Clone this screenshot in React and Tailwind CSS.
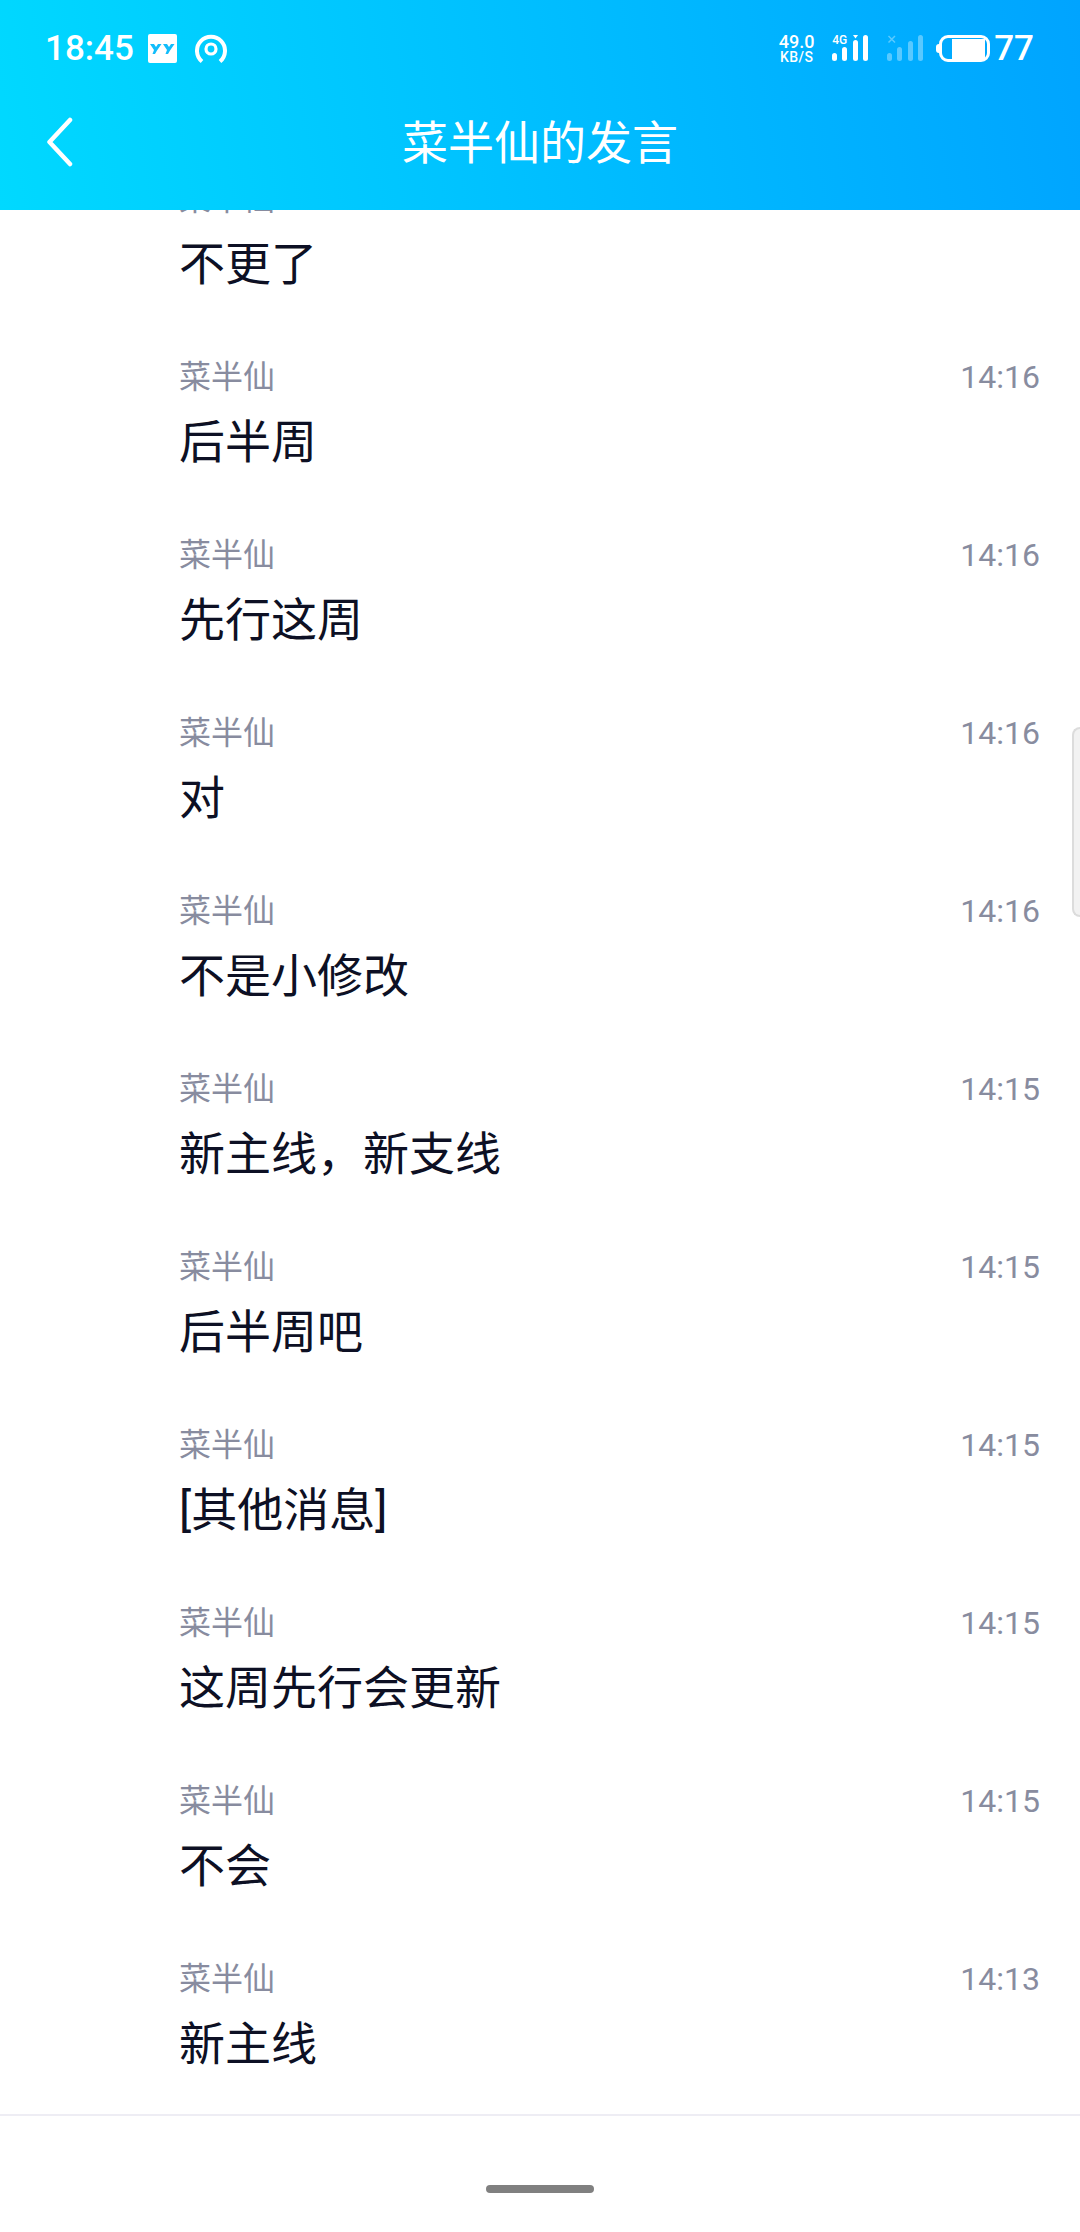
const rows = [
  ['不更了', '14:16'],
  ['后半周', '14:16'],
  ['先行这周', '14:16'],
  ['对', '14:16'],
  ['不是小修改', '14:16'],
  ['新主线，新支线', '14:15'],
  ['后半周吧', '14:15'],
  ['[其他消息]', '14:15'],
  ['这周先行会更新', '14:15'],
  ['不会', '14:15'],
  ['新主线', '14:13'],
];

const YyIcon = () => (
  <svg width="29" height="29" viewBox="0 0 29 29" className="ml-[14px]">
    <rect x="0" y="0" width="29" height="29" rx="2" fill="#fff" />
    <path d="M2 10 L6 10 L8 13 L10 10 L13.5 10 L9 16.5 L7 20 L4.5 20 L6 16 Z" fill="#12bdfb" />
    <path d="M15 10 L19 10 L21 13 L23 10 L26.5 10 L22 16.5 L20 20 L17.5 20 L19 16 Z" fill="#12bdfb" />
  </svg>
);

const HotspotIcon = () => (
  <svg width="32" height="30" viewBox="0 0 32 30" fill="none" stroke="#fff" className="ml-[18px]">
    <circle cx="16" cy="15" r="5" strokeWidth="3.2" />
    <path d="M7 27.5 A 14 14 0 1 1 25 27.5" strokeWidth="4" />
  </svg>
);

const Signal = ({ dim }) => (
  <svg width="37" height="27" viewBox="0 0 37 27" fill="#fff" opacity={dim ? 0.35 : 1} className="block">
    <rect x="0" y="18" width="5" height="8" rx="2.5" />
    <rect x="10" y="12" width="5" height="14" rx="2.5" />
    <rect x="21" y={dim ? 6 : 5} width="5" height={dim ? 20 : 21} rx="2.5" />
    <rect x="31" y="0" width="5" height="26" rx="2.5" />
    {!dim && <path d="M21 0 L26 0 L23.5 3.5 Z" />}
    {dim && <path d="M1.5 1 L8 7.5 M8 1 L1.5 7.5" stroke="#fff" strokeWidth="1.5" />}
  </svg>
);

const StatusRight = () => (
  <div className="flex items-center text-white">
    <div className="flex flex-col items-center w-[37px] font-medium">
      <span className="text-[18px] leading-[16px]">49.0</span>
      <span className="text-[14px] leading-[14px] tracking-[0.5px]">KB/S</span>
    </div>
    <div className="relative ml-[17px]">
      <span className="absolute left-0 top-[0px] text-[12px] leading-[11px] font-medium">4G</span>
      <Signal />
    </div>
    <div className="ml-[18px]">
      <Signal dim />
    </div>
    <div className="ml-[12px] flex items-center">
      <div className="w-[3px] h-[9px] bg-white rounded-l-sm" />
      <div className="w-[51px] h-[27px] border-[3px] border-white rounded-[9px] pr-[2px] flex justify-end items-center">
        <div className="w-[33px] h-[20px] bg-white" />
      </div>
    </div>
    <span className="ml-[4px] text-[35px] leading-[40px] font-medium">77</span>
  </div>
);

const App = () => {
  return (
    <div className="relative w-[1080px] h-[2232px] bg-white flex flex-col overflow-hidden font-['Roboto','Noto_Sans_CJK_SC',sans-serif]">
      {/* Header */}
      <div className="relative z-10 h-[210px] shrink-0 bg-[linear-gradient(80deg,#00d9ff,#00a4ff)]">
        <div className="flex items-center justify-between h-[97px] pl-[45px] pr-[46px]">
          <div className="flex items-center text-white">
            <span className="text-[35px] leading-[40px] font-medium">18:45</span>
            <YyIcon />
            <HotspotIcon />
          </div>
          <StatusRight />
        </div>
        <div className="relative flex items-center justify-center h-[91px]">
          <svg width="28" height="50" viewBox="0 0 28 50" fill="none" stroke="#fff" strokeWidth="4.5" strokeLinecap="round" strokeLinejoin="round" className="absolute left-[46px] top-[20px]">
            <path d="M24 3 L3.5 25 L24 47" />
          </svg>
          <span className="text-[46px] leading-[60px] text-white">菜半仙的发言</span>
        </div>
      </div>

      {/* Messages */}
      <div className="flex-1 overflow-hidden">
        <div className="-mt-[66px]">
          {rows.map(([msg, time], i) => (
            <div key={i} className="h-[178px] pt-[35px] pl-[179px] pr-[40px]">
              <div className="flex justify-between h-[40px] leading-[40px] text-[32px] text-[#888c9f]">
                <span>菜半仙</span>
                <span>{time}</span>
              </div>
              <div className="mt-[15px] text-[46px] leading-[60px] text-[#0d1024]">{msg}</div>
            </div>
          ))}
        </div>
      </div>

      {/* Bottom bar */}
      <div className="h-[118px] shrink-0 border-t-2 border-[#eeedf4] flex justify-center pt-[69px]">
        <div className="w-[108px] h-[8px] rounded-full bg-[#808080]" />
      </div>

      {/* Side handle */}
      <div className="absolute right-0 top-[727px] w-[8px] h-[190px] bg-[#f2f2f2] border-2 border-r-0 border-[#dcdcdc] rounded-l-[8px]" />
    </div>
  );
};

export default App;
